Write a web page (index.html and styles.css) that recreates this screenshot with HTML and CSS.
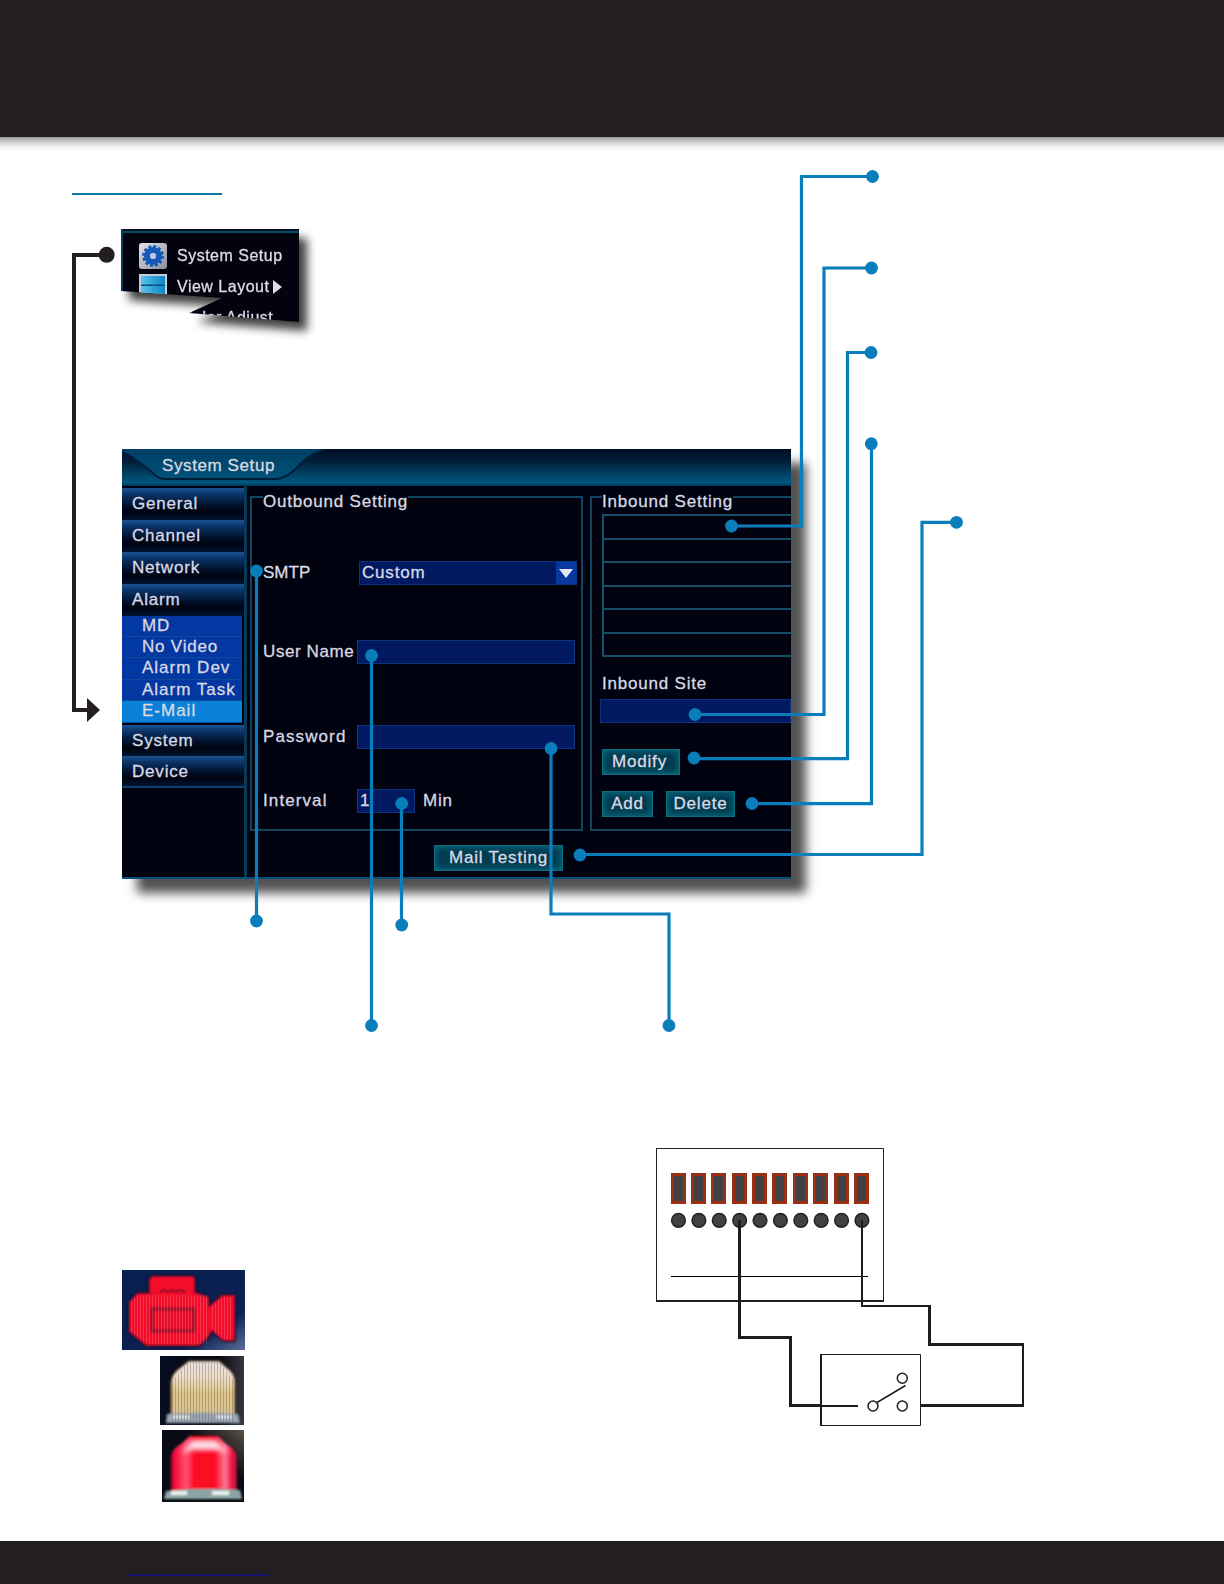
FILE: index.html
```html
<!DOCTYPE html>
<html lang="en">
<head>
  <meta charset="UTF-8">
  <meta name="viewport" content="width=device-width, initial-scale=1">
  <title>System Setup - E-Mail</title>
  <link rel="stylesheet" href="styles.css">
</head>
<body>
  <header class="page-header"></header>

  <main class="page">
    <div class="title-line"></div>

    <!-- Torn piece of the main menu -->
    <div class="menu-shadow">
      <div class="menu">
        <div class="menu-item">
          <svg class="menu-icon" viewBox="0 0 30 28">
            <defs>
              <linearGradient id="tile" x1="0" y1="0" x2="1" y2="1">
                <stop offset="0" stop-color="#e2e3ea"/>
                <stop offset="1" stop-color="#8b8e9c"/>
              </linearGradient>
            </defs>
            <rect x="1" y="1" width="28" height="26" rx="3" fill="url(#tile)"/>
            <circle cx="15" cy="14" r="9.4" fill="none" stroke="#1558b5" stroke-width="3" stroke-dasharray="2.9 2.02"/>
            <circle cx="15" cy="14" r="6" fill="none" stroke="#1459b8" stroke-width="6"/>
            <circle cx="15" cy="14" r="3" fill="#b9c9e6"/>
          </svg>
          <span>System Setup</span>
        </div>
        <div class="menu-item">
          <svg class="menu-icon" viewBox="0 0 30 28">
            <defs>
              <linearGradient id="sky" x1="0" y1="0" x2="1" y2="0">
                <stop offset="0" stop-color="#58c4ee"/>
                <stop offset="1" stop-color="#0d86c4"/>
              </linearGradient>
            </defs>
            <rect x="1" y="1" width="28" height="26" fill="#c4ccd8"/>
            <rect x="3" y="3" width="24" height="24" fill="url(#sky)"/>
            <path d="M3 12.3H27" stroke="#084f80" stroke-width="1.4"/>
            <path d="M15 3V27" stroke="#2f93c4" stroke-width=".8"/>
          </svg>
          <span>View Layout</span>
          <i class="menu-arrow"></i>
        </div>
        <div class="menu-item menu-item-cut"><span>Color Adjust</span></div>
      </div>
    </div>

    <!-- Setup window -->
    <section class="window">
      <div class="window-top">
        <svg class="window-tab" viewBox="0 0 230 37">
          <defs>
            <linearGradient id="tab" x1="0" y1="0" x2="0" y2="1">
              <stop offset="0" stop-color="#003f63"/>
              <stop offset="1" stop-color="#00527a"/>
            </linearGradient>
          </defs>
          <path d="M0 0H203C186 5 178 16 170 23C164 28 160 30 154 30H43C35 30 33 25 26 20C16 13 9 6 0 3Z" fill="url(#tab)"/>
          <path d="M0 3C9 6 16 13 26 20C33 25 35 30 43 30H154C160 30 164 28 170 23C178 16 186 5 203 1" fill="none" stroke="#001c36" stroke-width="2"/>
        </svg>
        <span class="window-title">System Setup</span>
      </div>
      <div class="window-body">
        <nav class="side">
          <a class="side-item">General</a>
          <a class="side-item">Channel</a>
          <a class="side-item">Network</a>
          <a class="side-item">Alarm</a>
          <div class="side-sub">
            <a>MD</a>
            <a>No Video</a>
            <a>Alarm Dev</a>
            <a>Alarm Task</a>
            <a class="active">E-Mail</a>
          </div>
          <a class="side-item">System</a>
          <a class="side-item last">Device</a>
        </nav>
        <div class="content">
          <div class="groups">
            <div class="group outbound">
              <span class="legend">Outbound Setting</span>
              <div class="field">
                <label class="tight">SMTP</label>
                <div class="select"><span>Custom</span><i></i></div>
              </div>
              <div class="field"><label class="name">User Name</label><div class="input"></div></div>
              <div class="field"><label>Password</label><div class="input"></div></div>
              <div class="field"><label>Interval</label><div class="input short">1</div><span>Min</span></div>
            </div>
            <div class="group inbound">
              <span class="legend">Inbound Setting</span>
              <div class="list">
                <div></div><div></div><div></div><div></div><div></div><div></div>
              </div>
              <label class="site">Inbound Site</label>
              <div class="input site-input"></div>
              <div class="buttons"><span class="btn modify">Modify</span></div>
              <div class="buttons"><span class="btn add">Add</span><span class="btn delete">Delete</span></div>
            </div>
          </div>
          <span class="btn testing">Mail Testing</span>
        </div>
      </div>
    </section>

    <div class="bottom">
      <!-- Alarm status icons -->
      <div class="status">
        <svg class="status-camera" viewBox="0 0 123 80">
          <defs>
            <pattern id="lines" width="3" height="4" patternUnits="userSpaceOnUse">
              <rect width="1" height="4" fill="#fff" opacity=".16"/>
            </pattern>
            <linearGradient id="night" x1="0" y1="0" x2="1" y2="1">
              <stop offset="0" stop-color="#07204e"/>
              <stop offset=".75" stop-color="#0c2054"/>
              <stop offset="1" stop-color="#5d7097"/>
            </linearGradient>
            <filter id="soft"><feGaussianBlur stdDeviation=".9"/></filter>
          </defs>
          <rect width="123" height="80" fill="url(#night)"/>
          <g filter="url(#soft)">
            <path d="M27 10Q28 6 32 6H70Q73 6 73 10V22L87 27V36L100 25H113V71H101L90 61L85 69L77 76H24L7 62V32L15 23H27Z" fill="#f40d2b" stroke="#35092c" stroke-width="2"/>
            <path d="M38 22L42 20L46 22L50 20L54 22L58 20L64 22" fill="none" stroke="#750b24" stroke-width="2"/>
            <rect x="30" y="39" width="42" height="22" fill="#e90b2a" stroke="#8a0a28" stroke-width="3"/>
          </g>
          <path d="M15 25H85V74H25L9 61V31Z" fill="url(#lines)"/>
          <path d="M88 37L100 27H111V69H101L88 58Z" fill="url(#lines)"/>
        </svg>
        <svg class="status-lamp" viewBox="0 0 84 69">
          <defs>
            <linearGradient id="cream" x1="0" y1="0" x2="0" y2="1">
              <stop offset="0" stop-color="#e9e1e3"/>
              <stop offset=".3" stop-color="#ecdfca"/>
              <stop offset=".6" stop-color="#dfc58a"/>
              <stop offset="1" stop-color="#d8c697"/>
            </linearGradient>
            <linearGradient id="dark" x1="0" y1="0" x2="1" y2="0">
              <stop offset="0" stop-color="#070e20"/>
              <stop offset=".7" stop-color="#080a12"/>
              <stop offset="1" stop-color="#393741"/>
            </linearGradient>
            <pattern id="scan" width="3" height="4" patternUnits="userSpaceOnUse">
              <rect width="1" height="4" fill="#4d3b24" opacity=".28"/>
            </pattern>
          </defs>
          <rect width="84" height="69" fill="url(#dark)"/>
          <g filter="url(#soft)">
            <path d="M11 59V26Q12 17 20 12L29 5H59L67 12Q75 17 75 26V59Z" fill="url(#cream)" stroke="#573815" stroke-width="1.5"/>
            <path d="M7 58Q42 55 78 58L80 67H6Z" fill="#9aa6b5"/>
            <path d="M12 61H30M56 61H72" stroke="#d9e3ea" stroke-width="3"/>
          </g>
          <path d="M11 59V26L29 6H59L75 26V66H11Z" fill="url(#scan)"/>
        </svg>
        <svg class="status-lamp red" viewBox="0 0 82 72">
          <defs>
            <linearGradient id="red" x1="0" y1="0" x2="1" y2="0">
              <stop offset="0" stop-color="#c3002c"/>
              <stop offset=".1" stop-color="#fb1b46"/>
              <stop offset=".23" stop-color="#ff5271"/>
              <stop offset=".36" stop-color="#fb0824"/>
              <stop offset=".66" stop-color="#fb0824"/>
              <stop offset=".82" stop-color="#fb7795"/>
              <stop offset=".91" stop-color="#f41b48"/>
              <stop offset="1" stop-color="#9c0e37"/>
            </linearGradient>
            <linearGradient id="corner" x1="0" y1="1" x2="1" y2="0">
              <stop offset=".65" stop-color="#080b15"/>
              <stop offset="1" stop-color="#5c5145"/>
            </linearGradient>
            <filter id="glow"><feGaussianBlur stdDeviation="2"/></filter>
          </defs>
          <rect width="82" height="72" fill="url(#corner)"/>
          <g filter="url(#soft)">
            <path d="M9 61V26Q10 19 19 14L28 6H56L64 14Q74 19 75 27V61Z" fill="url(#red)"/>
            <path d="M20 24L30 10H54L66 24L56 20H29Z" fill="#ffdce5" filter="url(#glow)"/>
            <path d="M4 61Q41 57 78 60L80 69H2Z" fill="#8da4a6"/>
            <path d="M9 63H25M50 63H67" stroke="#e8f3f0" stroke-width="4"/>
          </g>
        </svg>
      </div>

      <!-- Sensor wiring -->
      <svg class="wiring" viewBox="656 1148 370 280">
        <g fill="none" stroke="#231f20">
          <path d="M656 1148.5H883.5V1301" stroke-width="1"/>
          <path d="M656.5 1148V1301" stroke-width="1"/>
          <path d="M656 1301H884" stroke-width="2"/>
          <path d="M671 1276.5H868" stroke="#000" stroke-width="1"/>
        </g>
        <g id="terminals"></g>
        <g fill="none" stroke="#1f1c1d">
          <path d="M739.5 1220V1337.5H790.5V1405.5H821" stroke-width="3"/>
          <path d="M820 1406H858" stroke-width="2"/>
          <path d="M862 1220V1306H930" stroke-width="2"/>
          <path d="M929.5 1305V1344.5H1023" stroke-width="3"/>
          <path d="M1023 1343V1407" stroke-width="2"/>
          <path d="M1024 1405.5H920" stroke-width="3"/>
          <path d="M820 1354.5H920.5V1425.5H820" stroke-width="1"/>
          <path d="M821 1354V1426" stroke-width="2"/>
          <path d="M877 1402.5L905.5 1385.5" stroke-width="1.5"/>
          <g fill="#fff" stroke-width="1.5">
            <circle cx="873" cy="1406" r="5"/>
            <circle cx="902.3" cy="1378.3" r="5"/>
            <circle cx="902.3" cy="1406" r="5"/>
          </g>
        </g>
      </svg>
    </div>
  </main>

  <footer class="page-footer"><div class="footer-link"></div></footer>

  <!-- Callout lines over the page -->
  <svg class="callouts" viewBox="0 0 1224 1584">
    <g class="lead-black">
      <path d="M107 255H74V710H88"/>
      <circle cx="106.7" cy="254.8" r="8"/>
      <path class="head" d="M87 698L100 710L87 722Z"/>
    </g>
    <g class="lead">
      <path d="M872.5 176.5H801.5V526H731.5"/>
      <path d="M871.5 268H824V714.5H695"/>
      <path d="M871 352.5H847.5V758.7H694"/>
      <path d="M871.5 443.7V803.7H752"/>
      <path d="M956.5 522.3H922V854.5H580"/>
      <path d="M256.5 571V921"/>
      <path d="M371.5 655.5V1025.5"/>
      <path d="M401.5 803.5V925"/>
      <path d="M551 748.5V914H669V1025.5"/>
    </g>
    <g class="dots" id="dots"></g>
  </svg>

  <script>
    const ns = 'http://www.w3.org/2000/svg';

    function add(parent, name, attrs) {
      const el = document.createElementNS(ns, name);
      for (const key in attrs) el.setAttribute(key, attrs[key]);
      parent.appendChild(el);
    }

    const dots = [
      [872.5, 176.5], [731.5, 526], [871.5, 268], [695, 714.5],
      [871, 352.5], [694, 758], [871.3, 443.7], [752, 803.5],
      [956.5, 522.3], [580, 855], [256.5, 571], [256.5, 921],
      [371.5, 655.5], [371.5, 1025.5], [401.7, 803.5], [401.7, 925],
      [551, 748.5], [669, 1025.5]
    ];
    dots.forEach(([x, y]) => add(document.getElementById('dots'), 'circle', { cx: x, cy: y, r: 6.4 }));

    // Ten terminals: slot on top, screw below
    const terminals = document.getElementById('terminals');
    for (let i = 0; i < 10; i++) {
      const x = 678.5 + i * 20.38;
      add(terminals, 'rect', { x: Math.floor(x - 7.5) + 1.5, y: 1174.5, width: 12, height: 28, fill: '#414042', stroke: '#9b2f13', 'stroke-width': 3 });
      add(terminals, 'circle', { cx: x, cy: 1220.4, r: 6.9, fill: '#414042', stroke: '#231f20', 'stroke-width': 1.4 });
    }
  </script>
</body>
</html>
```
FILE: styles.css
```css
* {
  box-sizing: border-box;
}
body {
  margin: 0;
  position: relative;
  width: 1224px;
  height: 1584px;
  display: flex;
  flex-direction: column;
  overflow: hidden;
  background: #fff;
  font-family: "Liberation Sans", Arial, sans-serif;
}
.page-header {
  height: 137px;
  flex: none;
  background: #231f20;
}
.page {
  flex: 1;
  padding: 56px 72px 0;
  background: linear-gradient(#9c9a9a, #c4c3c3 4px, #eeeeee 9px, #fff 14px);
}
.title-line {
  width: 150px;
  height: 2px;
  background: #0e78a5;
}

/* Menu piece */
.menu-shadow {
  width: 178px;
  margin: 34px 0 0 49px;
  filter: drop-shadow(8px 9px 5px rgba(0, 0, 0, 0.75));
}
.menu {
  height: 93px;
  padding: 11px 0 0 15px;
  background: linear-gradient(#031020 2px, #0a4c62 2px, #0a4c62 4px, #02030f 4px);
  border-left: 2px solid #073c52;
  clip-path: polygon(0 0, 100% 0, 100% 100%, 68px 84px, 101px 69px, 0 62px);
}
.menu-item {
  display: flex;
  align-items: center;
  height: 31px;
  color: #dcdce6;
  font-size: 16px;
  letter-spacing: 0.5px;
  -webkit-text-stroke: 0.3px #dcdce6;
  white-space: nowrap;
}
.menu-icon {
  width: 30px;
  height: 28px;
  margin-right: 9px;
}
.menu-arrow {
  border-left: 9px solid #dcdce6;
  border-top: 7px solid transparent;
  border-bottom: 7px solid transparent;
  margin-left: 4px;
}
.menu-item-cut {
  padding-left: 43px;
}

/* Setup window */
.window {
  width: 669px;
  height: 430px;
  margin: 127px 0 0 50px;
  background: #01020f;
  color: #d9d9e3;
  font-size: 17px;
  letter-spacing: 0.8px;
  -webkit-text-stroke: 0.3px #d9d9e3;
  box-shadow: 15px 14px 10px rgba(0, 0, 0, 0.68);
  border-bottom: 2px solid #045078;
  display: flex;
  flex-direction: column;
  white-space: nowrap;
}
.window-top {
  display: grid;
  height: 37px;
  background: linear-gradient(#020f24, #01203a 35%, #005781 90%, #003754);
}
.window-tab,
.window-title {
  grid-area: 1 / 1;
}
.window-tab {
  width: 230px;
  height: 37px;
}
.window-title {
  padding: 7px 0 0 40px;
  line-height: 20px;
  letter-spacing: 0.6px;
}
.window-body {
  flex: 1;
  display: flex;
}
.side {
  width: 125px;
  padding-top: 2px;
  border-right: 3px solid #043c5a;
}
.side-item {
  display: block;
  width: 122px;
  height: 31.9px;
  padding: 6px 0 0 10px;
  line-height: 20px;
  background: linear-gradient(#1a5494, #0a3468 20%, #01102a 55%, #01030f 75%, #001433);
}
.side-item.last {
  border-bottom: 2px solid #0c4066;
}
.side-sub {
  width: 120px;
  margin-bottom: 2px;
}
.side-sub a {
  display: block;
  height: 21.4px;
  padding-left: 20px;
  line-height: 20px;
  background: #0338a2;
  border-bottom: 1px solid #0c4a9c;
}
.side-sub a:nth-child(n+3) {
  letter-spacing: 1px;
}
.side-sub .active {
  background: #0a80d8;
}
.content {
  flex: 1;
  min-width: 0;
  padding: 10px 0 0 3px;
}
.groups {
  display: flex;
  gap: 7px;
}
.group {
  height: 335px;
  border: 2px solid #104560;
}
.outbound {
  width: 333px;
  padding-left: 11px;
}
.inbound {
  flex: 1;
  border-right: 0;
  padding-left: 10px;
}
.legend {
  display: table;
  margin-top: -6px;
  line-height: 20px;
  background: #01020f;
}
.field {
  display: flex;
  align-items: center;
  height: 24px;
}
.field:nth-child(2) { margin-top: 49px; }
.field:nth-child(3) { margin-top: 55px; }
.field:nth-child(4) { margin-top: 61px; }
.field:nth-child(5) { margin-top: 40px; }
.field label {
  width: 94px;
  letter-spacing: 1.1px;
}
.field label.name {
  letter-spacing: 0.6px;
}
.field label.tight {
  width: 96px;
  letter-spacing: 0;
}
.field span {
  margin-left: 8px;
}
.input,
.select {
  width: 218px;
  height: 24px;
  background: #001960;
  border: 1px solid #0b3480;
}
.select {
  display: flex;
  justify-content: space-between;
  align-items: center;
}
.select span {
  margin-left: 2px;
}
.select i {
  width: 20px;
  height: 22px;
  padding: 7px 3px;
  background: #0838a0;
}
.select i::before {
  content: "";
  display: block;
  width: 0;
  border-top: 9px solid #e1e8f6;
  border-left: 7px solid transparent;
  border-right: 7px solid transparent;
}
.input.short {
  width: 58px;
  padding-left: 2px;
  line-height: 22px;
}
.list {
  margin-top: 2px;
  border-top: 2px solid #164e68;
  border-left: 2px solid #164e68;
}
.list div {
  height: 23.5px;
  border-bottom: 2px solid #164e68;
}
.site {
  display: block;
  margin-top: 17px;
  line-height: 20px;
}
.site-input {
  width: 191px;
  margin: 5px 0 26px -2px;
}
.buttons {
  display: flex;
  gap: 13px;
  height: 42px;
}
.btn {
  display: block;
  height: 26px;
  line-height: 23px;
  text-align: center;
  border: 1px solid #087082;
  background: #023c50;
  box-shadow: inset 0 0 6px 1px #077082;
}
.modify {
  width: 78px;
  padding-right: 3px;
}
.add { width: 51px; }
.delete { width: 69px; }
.testing {
  width: 129px;
  margin: 14px 0 0 184px;
}

/* Icons and wiring */
.bottom {
  display: flex;
  justify-content: space-between;
  margin-top: 269px;
  width: 954px;
}
.status {
  display: flex;
  flex-direction: column;
  align-items: flex-end;
  width: 123px;
  margin: 122px 0 0 50px;
}
.status-camera {
  width: 123px;
  height: 80px;
}
.status-lamp {
  width: 84px;
  height: 69px;
  margin: 6px 1px 0 0;
}
.status-lamp.red {
  width: 82px;
  height: 72px;
  margin-top: 5px;
}
.wiring {
  width: 370px;
  height: 280px;
}

.page-footer {
  flex: none;
  height: 43px;
  padding: 33px 0 0 127px;
  background: #231f20;
}
.footer-link {
  width: 142px;
  height: 2px;
  background: #16146b;
}

/* Callouts */
.callouts {
  position: absolute;
  top: 0;
  left: 0;
  width: 1224px;
  height: 1584px;
}
.lead path {
  fill: none;
  stroke: #0a7dbb;
  stroke-width: 3.2;
}
.dots {
  fill: #0a7dbb;
}
.lead-black path {
  fill: none;
  stroke: #231f20;
  stroke-width: 4;
}
.lead-black circle,
.lead-black .head {
  fill: #231f20;
  stroke: none;
}
```
